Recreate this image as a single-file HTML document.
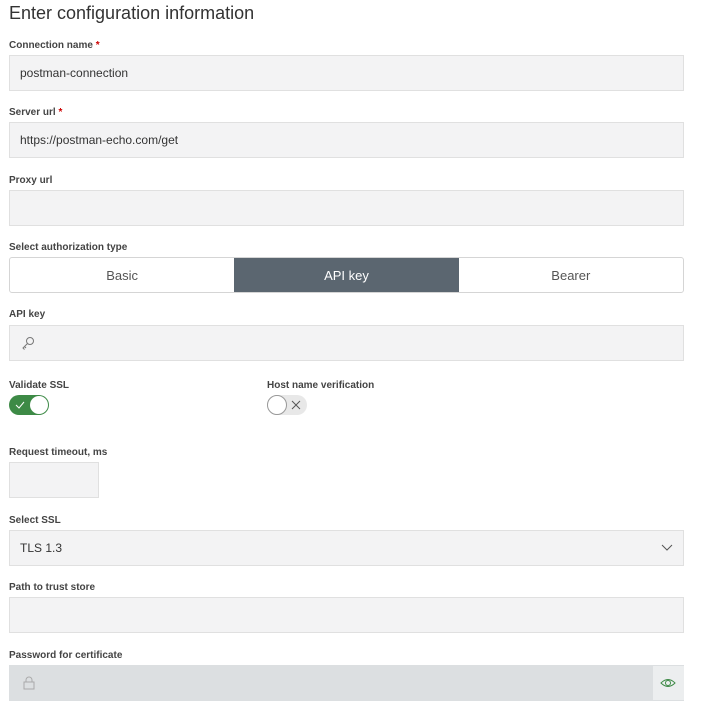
<!DOCTYPE html><html><head><style>
body{margin:0;background:#fff;font-family:"Liberation Sans",sans-serif;color:#333;width:703px;height:705px;overflow:hidden;position:relative}
.a{position:absolute}
.t{left:9px;top:3px;font-size:18px;color:#333}
.l{left:9px;font-size:10px;font-weight:bold;color:#444}
.l i{color:#c00;font-style:normal}
.f{left:9px;width:673px;height:34px;background:#f3f3f4;border:1px solid #e0e0e0;font-size:12px;line-height:35px;text-indent:10px;color:#333}
.seg{left:9px;top:257px;width:673px;height:34px;border:1px solid #d5d5d5;border-radius:3px;display:flex;font-size:13px;overflow:hidden}
.seg div{flex:1;text-align:center;line-height:35px;color:#555}
.seg .on{background:#5b6670;color:#fff}
</style></head><body>
<div class="a t">Enter configuration information</div>
<div class="a l" style="top:40px">Connection name <i>*</i></div>
<div class="a f" style="top:55px">postman-connection</div>
<div class="a l" style="top:107px">Server url <i>*</i></div>
<div class="a f" style="top:122px">https://postman-echo.com/get</div>
<div class="a l" style="top:175px">Proxy url</div>
<div class="a f" style="top:190px"></div>
<div class="a l" style="top:242px">Select authorization type</div>
<div class="a seg"><div>Basic</div><div class="on">API key</div><div>Bearer</div></div>
<div class="a l" style="top:309px">API key</div>
<div class="a f" style="top:325px"><svg class="a" style="left:11px;top:10px" width="14" height="16" viewBox="0 0 14 16"><circle cx="9" cy="5" r="3.5" fill="none" stroke="#777" stroke-width="1"/><path d="M6.5 7.5 L2 12 L3.5 13.5 M3.5 10.5 L5 12" fill="none" stroke="#777"/></svg></div>
<div class="a l" style="top:380px">Validate SSL</div>
<div class="a" style="left:9px;top:395px;width:40px;height:20px;border-radius:10px;background:#3d8a46"><svg class="a" style="left:6px;top:5px" width="10" height="10"><path d="M1 5 L4 8 L9 2" fill="none" stroke="#fff"/></svg><div class="a" style="left:21px;top:1px;width:18px;height:18px;border-radius:50%;background:#fff"></div></div>
<div class="a l" style="left:267px;top:380px">Host name verification</div>
<div class="a" style="left:267px;top:395px;width:40px;height:20px;border-radius:10px;background:#e8e8e8"><div class="a" style="left:0;top:0;width:18px;height:18px;border-radius:50%;background:#fff;border:1px solid #999"></div><svg class="a" style="left:24px;top:5px" width="10" height="10"><path d="M1 1L9 9M9 1L1 9" stroke="#555"/></svg></div>
<div class="a l" style="top:447px">Request timeout, ms</div>
<div class="a f" style="top:462px;width:88px"></div>
<div class="a l" style="top:515px">Select SSL</div>
<div class="a f" style="top:530px">TLS 1.3<svg class="a" style="left:651px;top:13px" width="12" height="8"><path d="M1 1L6 6L11 1" fill="none" stroke="#555"/></svg></div>
<div class="a l" style="top:582px">Path to trust store</div>
<div class="a f" style="top:597px"></div>
<div class="a l" style="top:650px">Password for certificate</div>
<div class="a f" style="top:665px;background:#dcdfe1;border-color:#dcdfe1"><svg class="a" style="left:13px;top:10px" width="12" height="14"><rect x="1" y="6" width="10" height="7" fill="none" stroke="#aaa"/><path d="M3 6V4a3 3 0 0 1 6 0v2" fill="none" stroke="#aaa"/></svg><div class="a" style="left:643px;top:0;width:31px;height:34px;background:#eceeef"><svg class="a" style="left:7px;top:10px" width="16" height="14"><path d="M1 7Q8 0 15 7Q8 14 1 7Z" fill="none" stroke="#3d8a46"/><circle cx="8" cy="7" r="2.5" fill="none" stroke="#3d8a46"/></svg></div></div>
</body></html>
